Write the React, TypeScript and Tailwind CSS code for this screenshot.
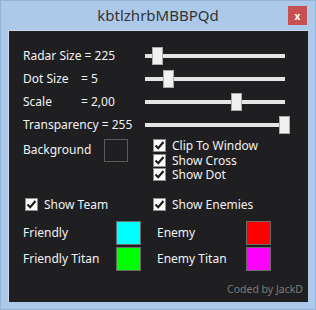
import React from "react";

const font = { fontFamily: '"Noto Sans", "Liberation Sans", sans-serif' };

const Slider = ({ thumb }: { thumb: number }) => (
  <div className="relative w-[140px] h-[4px] bg-[#e4e4e4]">
    <div
      className="absolute top-[-7px] w-[11px] h-[18px] bg-[#f0f0f0] border border-[#a9a9a9]"
      style={{ left: thumb }}
    />
  </div>
);

const Check = ({ label }: { label: string }) => (
  <div className="flex items-center gap-[6px] h-[14.5px]">
    <div className="w-[13px] h-[13px] bg-white border border-[#8c8c8c] flex items-center justify-center">
      <svg width="11" height="11" viewBox="0 0 11 11">
        <path d="M1.5 5.5 L4.2 8.2 L9.5 2" fill="none" stroke="#1c1c1c" strokeWidth="2.2" />
      </svg>
    </div>
    <span className="text-[12px] text-[#f2f2f2] leading-[13px]">{label}</span>
  </div>
);

const Swatch = ({ color }: { color: string }) => (
  <div className="w-[25px] h-[24px] border border-[#6b6b6b]" style={{ backgroundColor: color }} />
);

export default function App() {
  const sliders = [
    { label: "Radar Size = 225", thumb: 7 },
    { label: "Dot Size", value: "= 5", thumb: 18 },
    { label: "Scale", value: "= 2,00", thumb: 86 },
    { label: "Transparency = 255", thumb: 134 },
  ];

  return (
    <div
      className="relative w-[316px] h-[310px] bg-[#adc9e9] border border-[#95b3d6] px-[7px]"
      style={font}
    >
      <div className="h-[29px] flex items-center justify-center text-[15px] text-[#333333]">
        kbtlzhrbMBBPQd
      </div>
      <div className="absolute top-[5px] right-[8px] w-[19px] h-[19px] bg-[#c75050] flex items-center justify-center text-white text-[10px] font-bold leading-none">
        x
      </div>

      <div className="relative w-[300px] h-[272px] bg-[#1f1f22] border-l border-t border-[#c9daee] text-[#f2f2f2] text-[12px]">
        <div className="pt-[13px] pl-[14px]">
          {sliders.map((s, i) => (
            <div key={i} className="flex items-center h-[23px]">
              <div className="w-[122px] flex">
                {s.value ? (
                  <>
                    <span className="w-[58px]">{s.label}</span>
                    <span>{s.value}</span>
                  </>
                ) : (
                  <span>{s.label}</span>
                )}
              </div>
              <Slider thumb={s.thumb} />
            </div>
          ))}
        </div>

        <div className="flex pl-[14px] mt-[1px]">
          <div className="flex items-center w-[130px] h-[24px] mt-[1px]">
            <span className="w-[81px]">Background</span>
            <div className="w-[24px] h-[23px] border border-[#5c5c5c]" />
          </div>
          <div className="flex flex-col mt-[1.5px]">
            <Check label="Clip To Window" />
            <Check label="Show Cross" />
            <Check label="Show Dot" />
          </div>
        </div>

        <div className="flex pl-[16px] mt-[15px]">
          <div className="w-[128px]">
            <Check label="Show Team" />
          </div>
          <Check label="Show Enemies" />
        </div>

        <div className="flex pl-[14px] mt-[9px]">
          <div className="flex flex-col gap-[2px] w-[134px]">
            <div className="flex items-center h-[24px]">
              <span className="w-[93px]">Friendly</span>
              <Swatch color="#00ffff" />
            </div>
            <div className="flex items-center h-[24px]">
              <span className="w-[93px]">Friendly Titan</span>
              <Swatch color="#00ff00" />
            </div>
          </div>
          <div className="flex flex-col gap-[2px]">
            <div className="flex items-center h-[24px]">
              <span className="w-[89px]">Enemy</span>
              <Swatch color="#ff0000" />
            </div>
            <div className="flex items-center h-[24px]">
              <span className="w-[89px]">Enemy Titan</span>
              <Swatch color="#ff00ff" />
            </div>
          </div>
        </div>

        <div className="absolute right-[5px] bottom-[4px] text-[10.5px] text-[#7c7c7c]">
          Coded by JackD
        </div>
      </div>
    </div>
  );
}
